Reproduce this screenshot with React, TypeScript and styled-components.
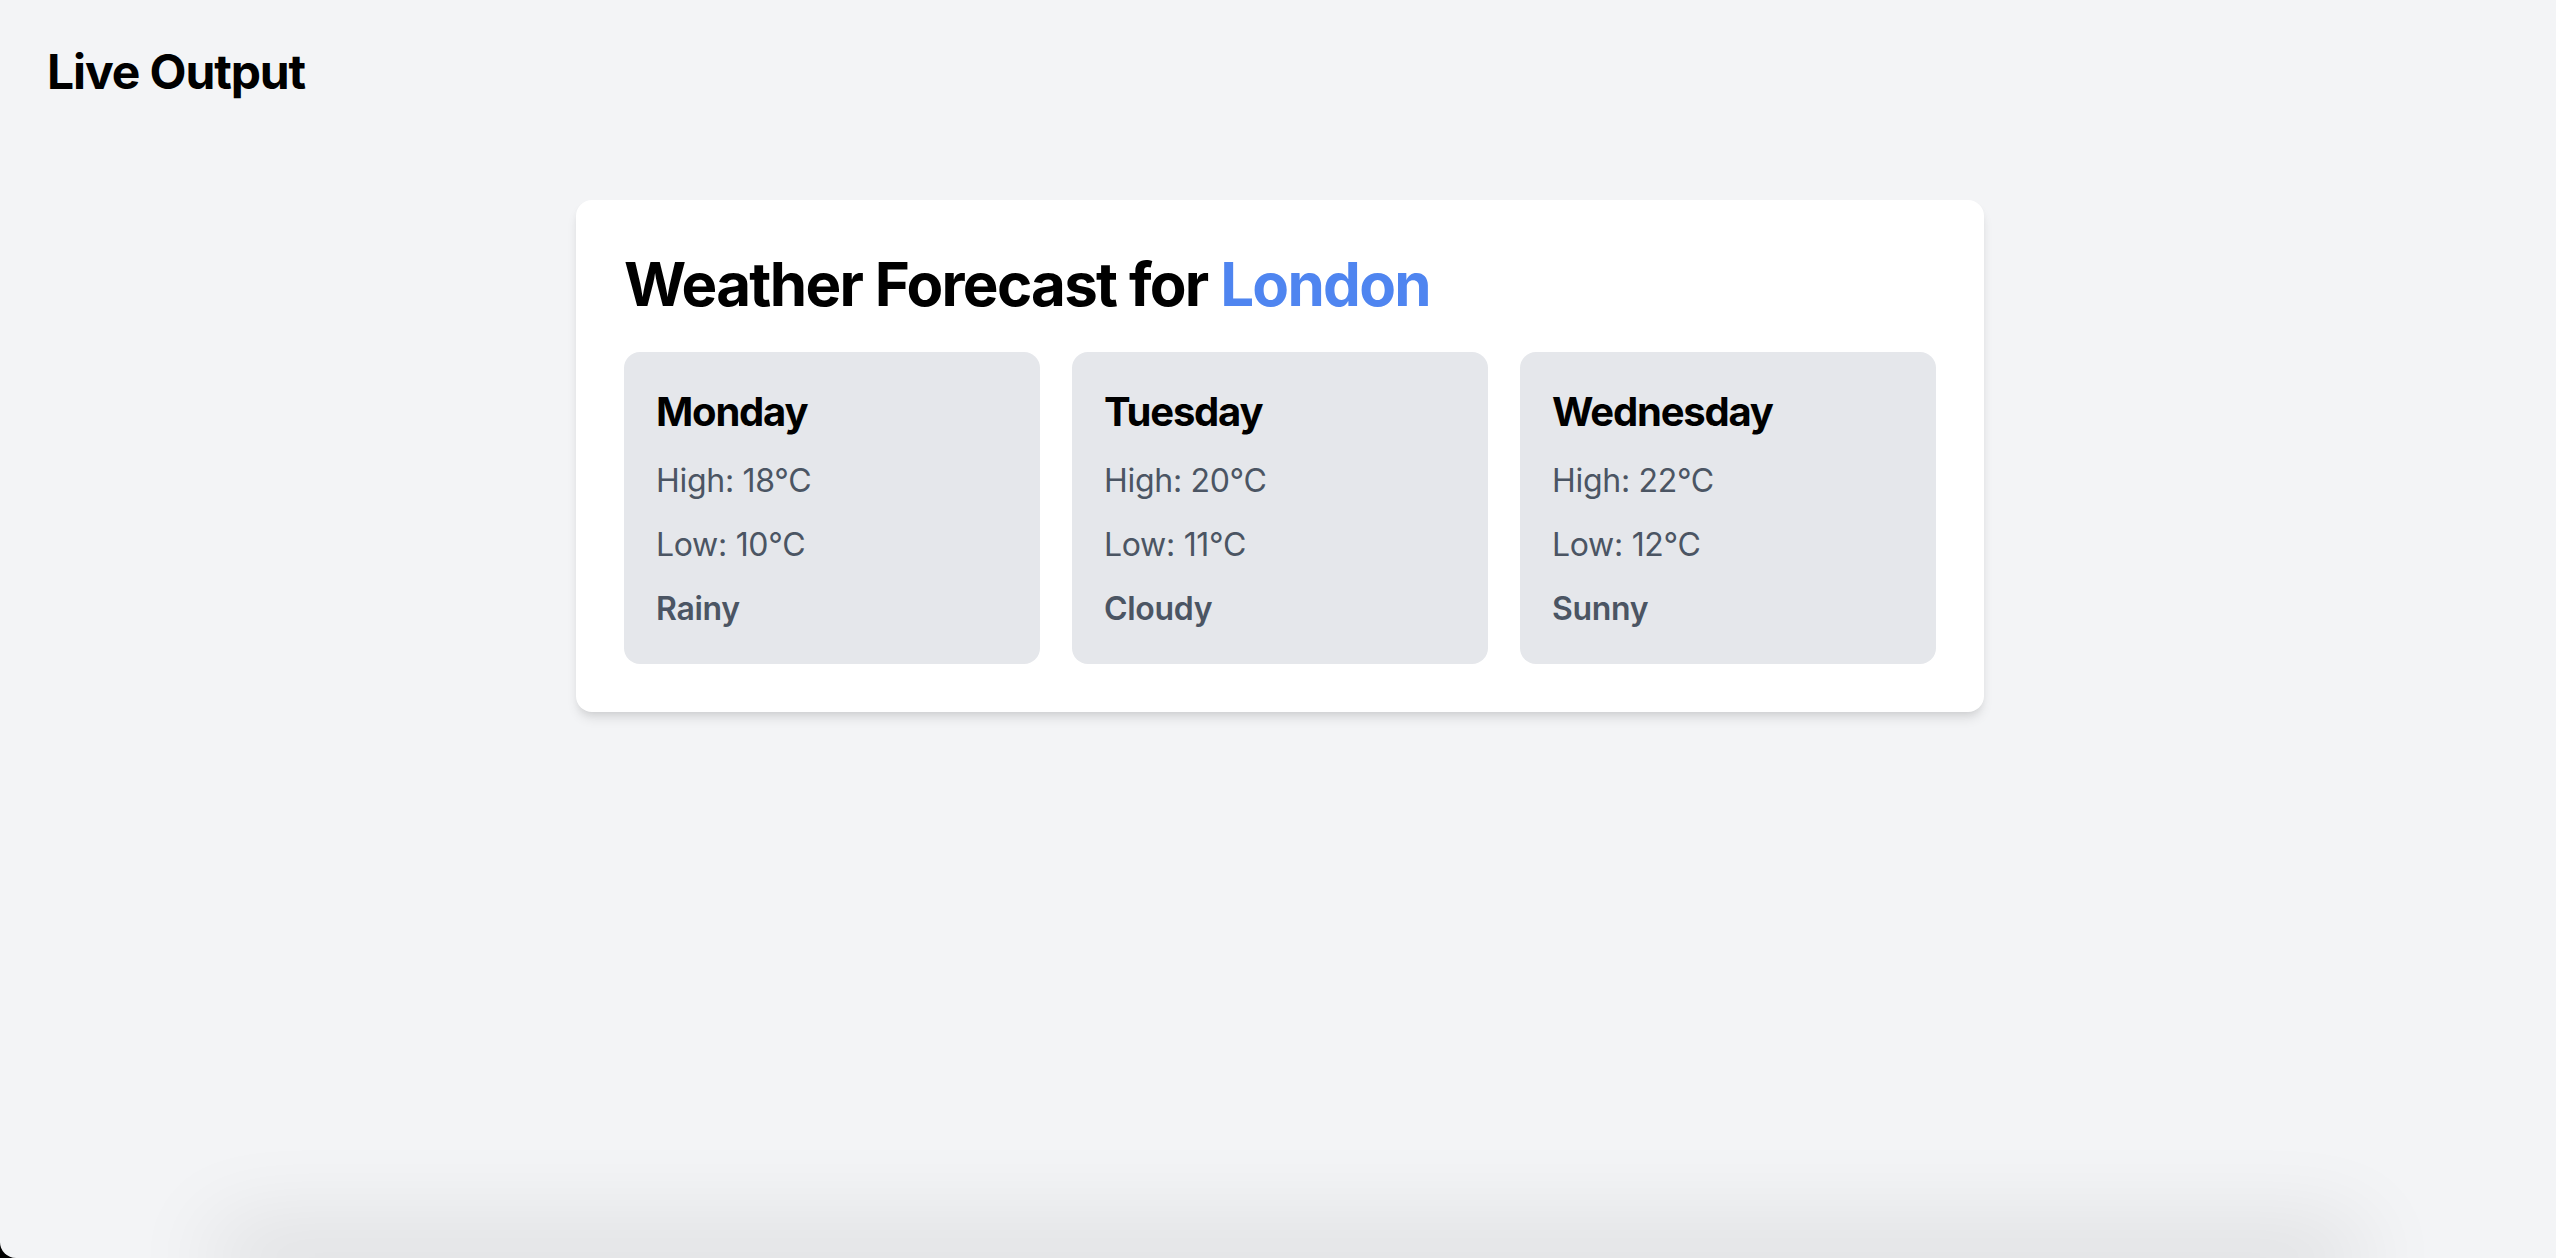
import styled, { createGlobalStyle } from "styled-components";

const GlobalStyle = createGlobalStyle`
  html, body {
    margin: 0;
    padding: 0;
    background: #000;
  }
  body {
    font-family: Inter, "Noto Sans", "Liberation Sans", sans-serif;
    -webkit-font-smoothing: antialiased;
  }
`;

const Page = styled.div`
  height: 100vh;
  display: flex;
  flex-direction: column;
  background: #f3f4f6;
  overflow: hidden;
  border-bottom-left-radius: 16px;
`;

const Header = styled.header`
  padding: 40px 48px 0 47px;
`;

const PageTitle = styled.h2`
  margin: 0;
  font-size: 48px;
  line-height: 64px;
  font-weight: 700;
  color: #000;
  letter-spacing: -1.1px;
`;

const Main = styled.main`
  margin-top: 96px;
  padding-left: 4px;
`;

const Card = styled.section`
  width: 1408px;
  box-sizing: border-box;
  margin: 0 auto;
  padding: 48px;
  background: #fff;
  border-radius: 16px;
  box-shadow: 0 8px 12px -2px rgba(0, 0, 0, 0.1),
    0 4px 8px -4px rgba(0, 0, 0, 0.1);
`;

const Title = styled.h1`
  margin: 0 0 32px;
  font-size: 60px;
  line-height: 72px;
  font-weight: 700;
  color: #000;
  letter-spacing: -1.7px;
`;

const City = styled.span`
  color: #4f85f0;
`;

const Grid = styled.div`
  display: grid;
  grid-template-columns: repeat(3, 1fr);
  gap: 32px;
`;

const DayCard = styled.div`
  background: #e5e7eb;
  border-radius: 16px;
  padding: 32px;
`;

const DayName = styled.h3`
  margin: 0;
  font-size: 40px;
  line-height: 56px;
  font-weight: 700;
  color: #000;
  letter-spacing: -1.2px;
`;

const Stat = styled.p<{ $strong?: boolean }>`
  margin: 16px 0 0;
  font-size: 32px;
  line-height: 48px;
  color: #4b5563;
  letter-spacing: -0.3px;
  font-weight: ${(p) => (p.$strong ? 600 : 400)};
  position: relative;
  top: 1px;
`;

const BottomGlow = styled.div`
  margin: auto 226px 0 245px;
  height: 0;
  box-shadow: 0 0 90px 30px rgba(0, 0, 0, 0.11);
`;

const forecast = [
  { day: "Monday", high: 18, low: 10, condition: "Rainy" },
  { day: "Tuesday", high: 20, low: 11, condition: "Cloudy" },
  { day: "Wednesday", high: 22, low: 12, condition: "Sunny" },
];

const App = () => {
  return (
    <>
      <GlobalStyle />
      <Page>
        <Header>
          <PageTitle>Live Output</PageTitle>
        </Header>
        <Main>
          <Card>
            <Title>
              Weather Forecast for <City>London</City>
            </Title>
            <Grid>
              {forecast.map((f) => (
                <DayCard key={f.day}>
                  <DayName>{f.day}</DayName>
                  <Stat>High: {f.high}°C</Stat>
                  <Stat>Low: {f.low}°C</Stat>
                  <Stat $strong>{f.condition}</Stat>
                </DayCard>
              ))}
            </Grid>
          </Card>
        </Main>
        <BottomGlow />
      </Page>
    </>
  );
};

export default App;
